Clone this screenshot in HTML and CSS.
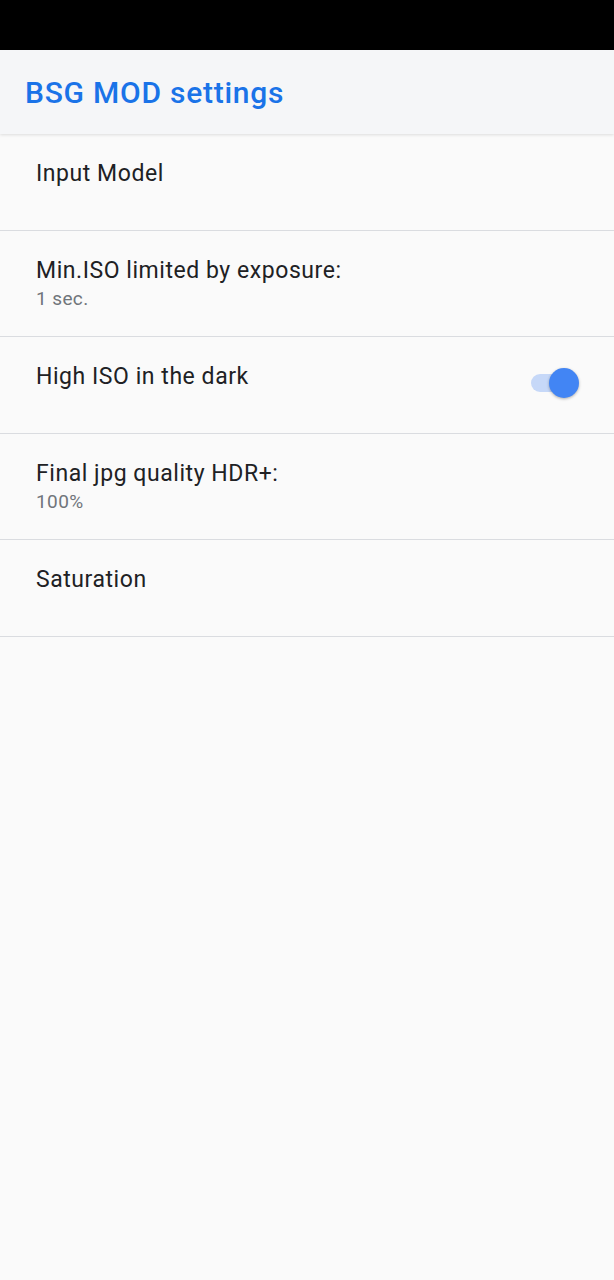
FILE: index.html
```html
<!DOCTYPE html>
<html lang="en">

<head>
    <meta charset="UTF-8" />
    <title>BSG MOD settings</title>
    <link rel="stylesheet" href="styles.css">
</head>

<body>
    <!-- Status bar -->
    <div class="status-bar"></div>

    <!-- App bar -->
    <header class="app-bar">
        <h1 class="app-title">BSG MOD settings</h1>
    </header>

    <div class="pref-list">
        <div class="pref">
            <div class="pref-text">
                <div class="pref-title">Input Model</div>
            </div>
        </div>
        <div class="pref">
            <div class="pref-text">
                <div class="pref-title">Min.ISO limited by exposure:</div>
                <div class="pref-summary">1 sec.</div>
            </div>
        </div>
        <div class="pref">
            <div class="pref-text">
                <div class="pref-title">High ISO in the dark</div>
            </div>
            <div class="switch on">
                <div class="switch-track"></div>
                <div class="switch-thumb"></div>
            </div>
        </div>
        <div class="pref">
            <div class="pref-text">
                <div class="pref-title">Final jpg quality HDR+:</div>
                <div class="pref-summary">100%</div>
            </div>
        </div>
        <div class="pref">
            <div class="pref-text">
                <div class="pref-title">Saturation</div>
            </div>
        </div>
    </div>
</body>

</html>
```

FILE: styles.css
```css
html,
body {
    margin: 0;
    padding: 0;
    height: 100%;
    background: #fafafa;
    font-family: Roboto, 'Open Sans', sans-serif;
}

* {
    box-sizing: border-box;
}

.status-bar {
    height: 50px;
    background: #000;
}

/* App bar */
.app-bar {
    height: 84px;
    display: flex;
    align-items: center;
    padding: 0 25px;
    background: #f5f6f8;
    box-shadow: 0 1px 3px rgba(0, 0, 0, 0.12);
    position: relative;
    z-index: 2;
}

.app-title {
    margin: 0;
    font-size: 30px;
    font-weight: 500;
    color: #1a73e8;
    letter-spacing: 0.75px;
}

/* Preference rows */
.pref {
    display: flex;
    min-height: 97px;
    padding: 24px 36px 25px;
    border-bottom: 1px solid #dadce0;
}

.pref-text {
    flex: 1;
}

.pref-title {
    font-size: 23px;
    line-height: 32px;
    color: #202124;
    letter-spacing: 0.55px;
}

.pref-summary {
    font-size: 19px;
    line-height: 24px;
    color: #70757a;
    letter-spacing: 0.4px;
}

/* Switch */
.switch {
    position: relative;
    align-self: center;
    width: 48px;
    height: 32px;
    margin-bottom: 4px;
    margin-right: -1px;
}

.switch-track {
    position: absolute;
    left: 0;
    top: 7px;
    width: 40px;
    height: 18px;
    border-radius: 9px;
    background: #c6d8f8;
}

.switch-thumb {
    position: absolute;
    right: 0;
    top: 1px;
    width: 30px;
    height: 30px;
    border-radius: 50%;
    background: #4285f4;
    box-shadow: 0 1px 3px rgba(0, 0, 0, 0.3);
}
```
